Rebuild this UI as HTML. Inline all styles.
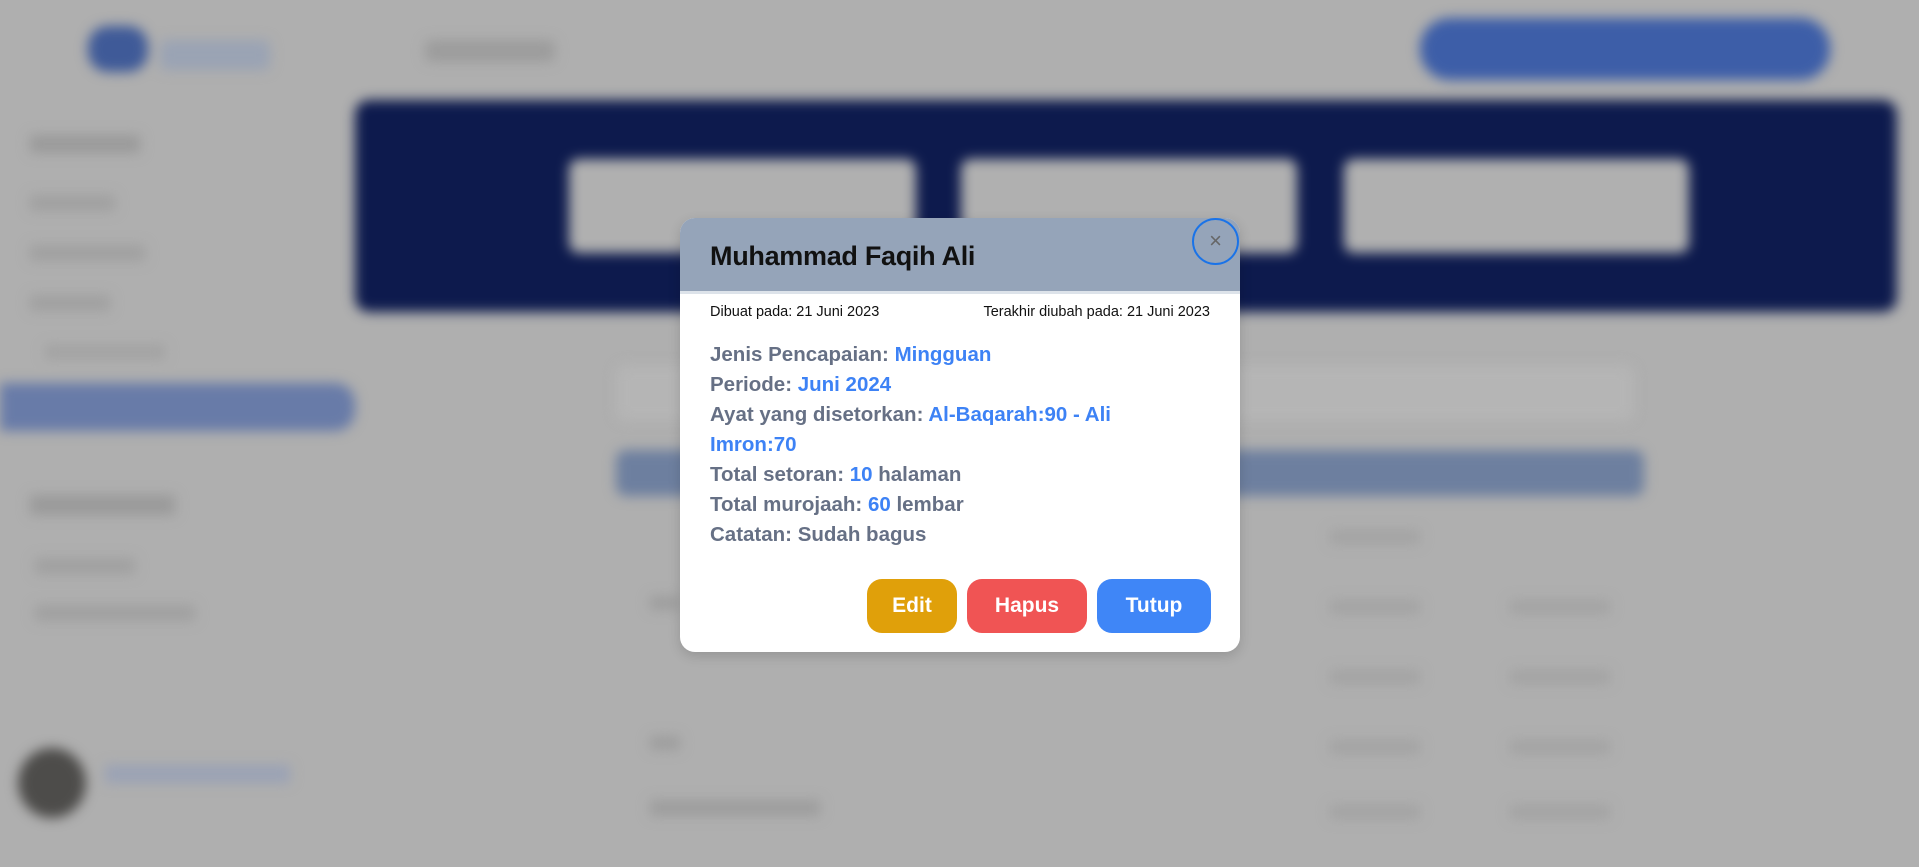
<!DOCTYPE html>
<html><head><meta charset="utf-8"><style>
*{box-sizing:border-box;margin:0;padding:0}
body{width:1919px;height:867px;overflow:hidden;background:#afafaf;font-family:"Liberation Sans",sans-serif;position:relative}
.bg{position:absolute;inset:0;filter:blur(6px)}
.b{position:absolute}
.modal{position:absolute;left:680px;top:218px;width:560px;height:434px;background:#fff;border-radius:15px;overflow:hidden;box-shadow:0 4px 12px rgba(0,0,0,.15)}
.hd{height:76px;background:#95a4b9;border-bottom:3px solid #dde3ea;position:relative}
.hd h1{position:absolute;left:30px;top:23px;font-size:27px;font-weight:700;color:#111;letter-spacing:-0.3px}
.close{position:absolute;left:512px;top:0px;width:47px;height:47px;border:2px solid #1a73e8;border-radius:50%;color:#666;font-size:22px;line-height:42px;text-align:center}
.dates{position:absolute;top:86px;left:30px;right:30px;font-size:14.5px;color:#111;display:flex;justify-content:space-between}
.lines{position:absolute;top:122px;left:30px;width:470px;font-size:20.5px;font-weight:700;color:#667085;line-height:30px}
.lines span{color:#3d82f5}
.btn{position:absolute;top:361px;height:54px;border-radius:15px;color:#fff;font-weight:700;font-size:21px;line-height:54px;text-align:center}
</style></head><body>
<div class="bg">
 <div class="b" style="left:88px;top:26px;width:60px;height:46px;border-radius:20px;background:#3f5a98"></div>
 <div class="b" style="left:160px;top:40px;width:110px;height:30px;background:#9aa3b4;border-radius:6px"></div>
 <div class="b" style="left:425px;top:40px;width:130px;height:22px;background:#9c9c9c;border-radius:6px"></div>
 <div class="b" style="left:1420px;top:18px;width:410px;height:62px;background:#3d5ea8;border-radius:30px"></div>
 <div class="b" style="left:30px;top:135px;width:110px;height:18px;background:#9a9a9a"></div>
 <div class="b" style="left:30px;top:195px;width:85px;height:16px;background:#a0a0a0"></div>
 <div class="b" style="left:30px;top:245px;width:115px;height:16px;background:#a0a0a0"></div>
 <div class="b" style="left:30px;top:295px;width:80px;height:16px;background:#a0a0a0"></div>
 <div class="b" style="left:45px;top:345px;width:120px;height:14px;background:#a2a2a2"></div>
 <div class="b" style="left:0;top:383px;width:355px;height:48px;background:#687ba8;border-radius:0 20px 20px 0"></div>
 <div class="b" style="left:30px;top:495px;width:145px;height:20px;background:#9a9a9a"></div>
 <div class="b" style="left:35px;top:558px;width:100px;height:16px;background:#a0a0a0"></div>
 <div class="b" style="left:35px;top:605px;width:160px;height:16px;background:#a0a0a0"></div>
 <div class="b" style="left:18px;top:748px;width:68px;height:70px;border-radius:50%;background:#4d4c4a"></div>
 <div class="b" style="left:105px;top:765px;width:185px;height:18px;background:#9aa2b5"></div>
 <div class="b" style="left:355px;top:100px;width:1542px;height:212px;background:#0d1a4d;border-radius:14px"></div>
 <div class="b" style="left:569px;top:159px;width:347px;height:94px;background:#b0b0b0;border-radius:10px"></div>
 <div class="b" style="left:961px;top:159px;width:336px;height:94px;background:#b0b0b0;border-radius:10px"></div>
 <div class="b" style="left:1344px;top:159px;width:345px;height:94px;background:#b0b0b0;border-radius:10px"></div>
 <div class="b" style="left:616px;top:365px;width:1018px;height:56px;background:#b5b5b5;border-radius:10px"></div>
 <div class="b" style="left:616px;top:450px;width:1028px;height:46px;background:#6d7f9f;border-radius:10px"></div>
 <div class="b" style="left:650px;top:596px;width:30px;height:14px;background:#9d9d9d"></div>
 <div class="b" style="left:650px;top:736px;width:30px;height:14px;background:#9d9d9d"></div>
 <div class="b" style="left:650px;top:800px;width:170px;height:16px;background:#9d9d9d"></div>
 <div class="b" style="left:1330px;top:530px;width:90px;height:14px;background:#a3a3a3"></div>
 <div class="b" style="left:1330px;top:600px;width:90px;height:14px;background:#a3a3a3"></div>
 <div class="b" style="left:1510px;top:600px;width:100px;height:14px;background:#a3a3a3"></div>
 <div class="b" style="left:1330px;top:670px;width:90px;height:14px;background:#a3a3a3"></div>
 <div class="b" style="left:1510px;top:670px;width:100px;height:14px;background:#a3a3a3"></div>
 <div class="b" style="left:1330px;top:740px;width:90px;height:14px;background:#a3a3a3"></div>
 <div class="b" style="left:1510px;top:740px;width:100px;height:14px;background:#a3a3a3"></div>
 <div class="b" style="left:1330px;top:805px;width:90px;height:14px;background:#a3a3a3"></div>
 <div class="b" style="left:1510px;top:805px;width:100px;height:14px;background:#a3a3a3"></div>
</div>
<div class="modal">
 <div class="hd"><h1>Muhammad Faqih Ali</h1><div class="close">×</div></div>
 <div class="dates"><span>Dibuat pada: 21 Juni 2023</span><span>Terakhir diubah pada: 21 Juni 2023</span></div>
 <div class="lines">
  <div>Jenis Pencapaian: <span>Mingguan</span></div>
  <div>Periode: <span>Juni 2024</span></div>
  <div>Ayat yang disetorkan: <span>Al-Baqarah:90 - Ali Imron:70</span></div>
  <div>Total setoran: <span>10</span> halaman</div>
  <div>Total murojaah: <span>60</span> lembar</div>
  <div>Catatan: Sudah bagus</div>
 </div>
 <div class="btn" style="left:187px;width:90px;background:#e0a00a">Edit</div>
 <div class="btn" style="left:287px;width:120px;background:#f05454">Hapus</div>
 <div class="btn" style="left:417px;width:114px;background:#3f86f7">Tutup</div>
</div>
</body></html>
